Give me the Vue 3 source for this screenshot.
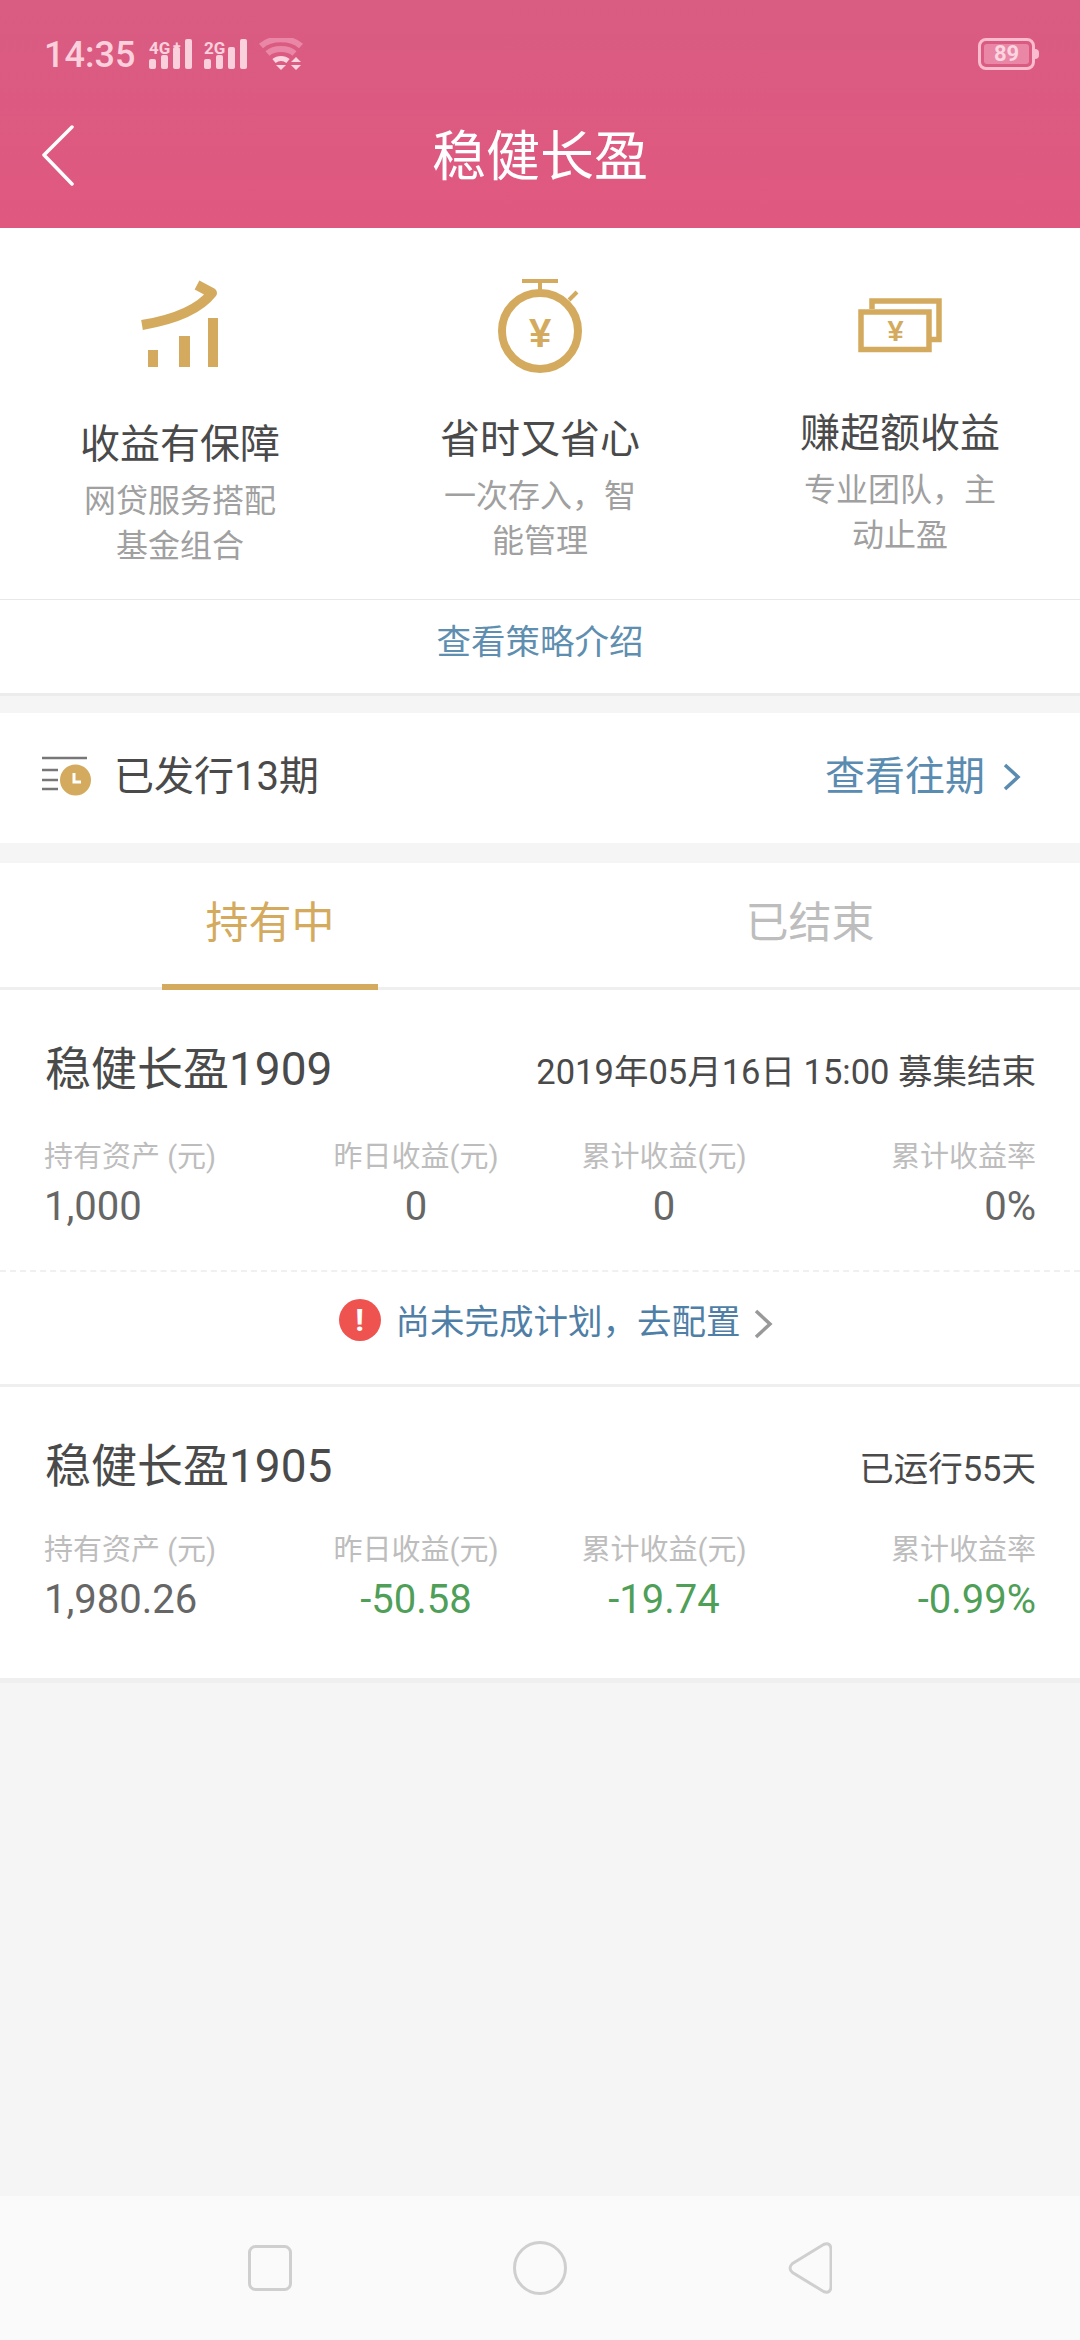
<script setup>
const cards = [
  {
    id: 1,
    name: '稳健长盈1909',
    meta: '2019年05月16日 15:00 募集结束',
    stats: [
      { label: '持有资产 (元)', value: '1,000' },
      { label: '昨日收益(元)', value: '0' },
      { label: '累计收益(元)', value: '0' },
      { label: '累计收益率', value: '0%' }
    ],
    notice: true
  },
  {
    id: 2,
    name: '稳健长盈1905',
    meta: '已运行55天',
    stats: [
      { label: '持有资产 (元)', value: '1,980.26' },
      { label: '昨日收益(元)', value: '-50.58', down: true },
      { label: '累计收益(元)', value: '-19.74', down: true },
      { label: '累计收益率', value: '-0.99%', down: true }
    ],
    notice: false
  }
]
</script>

<template>
  <div class="page">
    <header class="head">
      <div class="status">
        <span class="time">14:35</span>
        <svg class="signal" width="100" height="36" viewBox="0 0 100 36">
          <text x="0" y="16" class="net">4G</text>
          <text x="24" y="13" class="plus">+</text>
          <rect x="0" y="21" width="7" height="10" rx="2" />
          <rect x="12" y="17" width="7" height="14" rx="2" />
          <rect x="24" y="9" width="7" height="22" rx="2" />
          <rect x="36" y="1" width="7" height="30" rx="2" />
          <text x="55" y="16" class="net">2G</text>
          <rect x="55" y="21" width="7" height="10" rx="2" />
          <rect x="67" y="17" width="7" height="14" rx="2" />
          <rect x="79" y="9" width="7" height="22" rx="2" />
          <rect x="91" y="1" width="7" height="30" rx="2" />
        </svg>
        <svg class="wifi" width="44" height="34" viewBox="0 0 44 34">
          <path d="M2 8 C12 -1 32 -1 42 8" class="wifi-dim" />
          <path d="M8.5 15.5 C15 9.5 29 9.5 35.5 15.5" class="wifi-dim" />
          <path d="M15 23 C19 19.5 25 19.5 29 23" class="wifi-on" />
          <path d="M17 27 H27 L22 32 Z" fill="#fbd5e0" />
          <path d="M32 24 L37 19 L42 24 Z M32 27 H42 L37 32 Z" fill="#fbd5e0" />
        </svg>
        <span class="grow"></span>
        <div class="battery">
          <div class="battery-fill">89</div>
          <i class="battery-tip"></i>
        </div>
      </div>
      <div class="title-row">
        <svg class="back" width="34" height="62" viewBox="0 0 34 62">
          <path d="M31 2 L3 30 L31 59" />
        </svg>
        <h1>稳健长盈</h1>
      </div>
    </header>

    <section class="features">
      <div class="feature">
        <svg class="ic ic-chart" width="80" height="90" viewBox="140 280 80 90">
          <path class="gold-line" d="M142 325 C172 320 198 311 212 293 L197 285" />
          <rect x="148" y="350" width="10" height="17" />
          <rect x="179" y="336" width="11" height="31" />
          <rect x="208" y="318" width="10" height="49" />
        </svg>
        <div class="f-title">收益有保障</div>
        <p>网贷服务搭配基金组合</p>
      </div>
      <div class="feature">
        <svg class="ic ic-watch" width="90" height="98" viewBox="495 276 90 98">
          <circle class="gold-ring" cx="540" cy="331" r="38" />
          <path class="gold-thin" d="M522 281 H558 M540 281 V291 M569 300 L577 292" />
          <text x="540" y="347" class="yen big">¥</text>
        </svg>
        <div class="f-title">省时又省心</div>
        <p>一次存入，智能管理</p>
      </div>
      <div class="feature">
        <svg class="ic ic-money" width="90" height="60" viewBox="855 295 90 60">
          <path class="gold-thin wide" d="M872 309 V301 H939 V339.5 H931" />
          <rect class="gold-thin wide" x="861" y="312" width="68" height="37.500" />
          <text x="895.5" y="341" class="yen small">¥</text>
        </svg>
        <div class="f-title">赚超额收益</div>
        <p>专业团队，主动止盈</p>
      </div>
    </section>
    <div class="strategy">查看策略介绍</div>

    <section class="issued">
      <svg width="50" height="40" viewBox="0 0 50 40">
        <path class="list-lines" d="M0 2 H45 M0 14 H16 M0 24 H16 M0 33 H16" />
        <circle cx="33.500" cy="24" r="15.500" fill="#d4ab5e" />
        <path d="M32 17 V26 H39" fill="none" stroke="#fff" stroke-width="3" />
      </svg>
      <span class="issued-text">已发行13期</span>
      <span class="grow"></span>
      <span class="history">查看往期</span>
      <svg class="chev" width="20" height="30" viewBox="0 0 20 30">
        <path d="M3 3 L16 15 L3 27" />
      </svg>
    </section>

    <nav class="tabs">
      <div class="tab active">持有中</div>
      <div class="tab">已结束</div>
    </nav>

    <section class="cards">
      <article v-for="card in cards" :key="card.id" class="card" :class="{ 'has-notice': card.notice }">
        <div class="card-top">
          <h2>{{ card.name }}</h2>
          <span class="meta">{{ card.meta }}</span>
        </div>
        <div class="stats">
          <div v-for="s in card.stats" :key="s.label" class="stat">
            <div class="label">{{ s.label }}</div>
            <div class="value" :class="{ down: s.down }">{{ s.value }}</div>
          </div>
        </div>
        <div v-if="card.notice" class="notice">
          <span class="alert">!</span>
          <span class="notice-text">尚未完成计划，去配置</span>
          <svg class="chev-grey" width="20" height="30" viewBox="0 0 20 30">
            <path d="M2 2 L16 15 L2 28" />
          </svg>
        </div>
      </article>
    </section>

    <span class="grow"></span>

    <footer class="navbar">
      <svg width="44" height="46" viewBox="0 0 44 46"><rect x="1.500" y="1.500" width="41" height="43" rx="6" /></svg>
      <svg width="54" height="54" viewBox="0 0 54 54"><circle cx="27" cy="27" r="25.500" /></svg>
      <svg width="44" height="52" viewBox="0 0 44 52"><path d="M4 21.500 L35 2.500 Q42 0 42.500 7 V45 Q42 52 35 49.500 L4 30.500 Q-1 26 4 21.500 Z" transform="translate(0.500 0)" /></svg>
    </footer>
  </div>
</template>

<style>
html, body { margin: 0; padding: 0; background: #f5f5f5; }
</style>

<style scoped>
.page {
  width: 1080px;
  height: 2340px;
  display: flex;
  flex-direction: column;
  background: #f5f5f5;
  font-family: Roboto, "Noto Sans CJK SC", sans-serif;
  overflow: hidden;
}
.grow { flex: 1; }

.head {
  height: 228px;
  flex: none;
  background: linear-gradient(#d95c82, #e05880);
  color: #fff;
}
.status {
  height: 110px;
  box-sizing: border-box;
  padding: 37px 45px 0 44px;
  display: flex;
  align-items: flex-start;
  color: #fbd0dd;
}
.time { font-size: 36px; font-weight: 500; line-height: 36px; width: 105px; }
.signal { fill: #fbd0dd; margin-top: 1px; }
.net { font-size: 17px; font-weight: 700; fill: #fbd0dd; font-family: Roboto, sans-serif; }
.plus { font-size: 14px; font-weight: 700; fill: #fbd0dd; }
.wifi { margin: 1px 0 0 10px; fill: none; }
.wifi-dim { fill: none; stroke: #ea87a6; stroke-width: 6; }
.wifi-on { fill: none; stroke: #fbd5e0; stroke-width: 5; }
.battery {
  position: relative;
  width: 57px;
  height: 32px;
  margin-top: 1px;
  box-sizing: border-box;
  border: 3px solid #fbbccf;
  border-radius: 8px;
  padding: 3px;
}
.battery-fill {
  height: 100%;
  background: #ea87a6;
  border-radius: 3px;
  color: #fbd5e0;
  font-size: 22px;
  font-weight: 700;
  line-height: 20px;
  text-align: center;
}
.battery-tip {
  position: absolute;
  right: -7px;
  top: 8px;
  width: 4px;
  height: 10px;
  background: #fbbccf;
  border-radius: 0 4px 4px 0;
}
.title-row {
  position: relative;
  height: 96px;
  display: flex;
  align-items: center;
  justify-content: center;
}
h1 {
  margin: 0;
  font-size: 54px;
  font-weight: 400;
  line-height: 90px;
}
.back {
  position: absolute;
  left: 41px;
  top: 15px;
  fill: none;
  stroke: #fff;
  stroke-width: 3.500;
  stroke-linecap: round;
  stroke-linejoin: round;
}

.features {
  height: 371px;
  flex: none;
  background: #fff;
  display: grid;
  grid-template-columns: repeat(3, 360px);
  border-bottom: 1px solid #e8e8e8;
}
.feature {
  display: flex;
  flex-direction: column;
  align-items: center;
}
.ic { display: block; }
.ic-chart { margin: 52px 0 47px; }
.ic-watch { margin: 48px 0 38px; }
.ic-money { margin: 67px 0 51px; }
.f-title {
  font-size: 40px;
  line-height: 56px;
  color: #4a4a4a;
}
.feature p {
  margin: 5.5px 0 0;
  width: 196px;
  font-size: 32px;
  line-height: 45px;
  color: #a0a0a0;
  text-align: center;
}
.gold-line { fill: none; stroke: #d4ab5e; stroke-width: 10; stroke-linejoin: round; }
.ic-chart rect { fill: #d4ab5e; }
.gold-ring { fill: none; stroke: #d4ab5e; stroke-width: 8; }
.gold-thin { fill: none; stroke: #d4ab5e; stroke-width: 4; }
.wide { stroke-width: 5.500; }
.yen { fill: #d4ab5e; text-anchor: middle; font-weight: 700; font-family: "Liberation Sans", sans-serif; }
.yen.big { font-size: 40px; }
.yen.small { font-size: 29px; }

.strategy {
  height: 96px;
  flex: none;
  box-sizing: border-box;
  background: #fff;
  padding-top: 19px;
  font-size: 34.500px;
  line-height: 46px;
  color: #5f8fb0;
  text-align: center;
  border-bottom: 3px solid #ececec;
}

.issued {
  height: 130px;
  flex: none;
  box-sizing: border-box;
  margin-top: 17px;
  background: #fff;
  display: flex;
  align-items: center;
  padding: 0 58px 10px 42px;
}
.issued svg:first-child { margin-top: 6px; }
.list-lines { fill: none; stroke: #777; stroke-width: 2.500; }
.issued-text { margin-left: 22px; font-size: 40px; color: #4a4a4a; }
.history { font-size: 40px; color: #5a8bb0; }
.chev { margin: 8px 0 0 17px; fill: none; stroke: #5a8bb0; stroke-width: 3.500; }
.chev path, .chev-grey path { fill: none; }

.tabs {
  height: 124px;
  flex: none;
  margin-top: 20px;
  background: #fff;
  display: grid;
  grid-template-columns: 1fr 1fr;
  border-bottom: 3px solid #efefef;
}
.tab {
  position: relative;
  text-align: center;
  font-size: 43px;
  line-height: 120px;
  color: #bdbdbd;
}
.tab.active { color: #d4ab5e; }
.tab.active::after {
  content: "";
  position: absolute;
  left: 162px;
  width: 216px;
  bottom: -3px;
  height: 6px;
  background: #d4ab5e;
}

.cards {
  background: #fff;
  border-bottom: 5px solid #efefef;
  flex: none;
}
.card { border-bottom: 3px solid #efefef; }
.card:last-child { border-bottom: 0; padding-bottom: 53px; }
.card-top {
  display: flex;
  justify-content: space-between;
  align-items: center;
  padding: 49px 44px 0 45px;
  height: 60px;
}
.has-notice .card-top { padding-top: 49px; }
h2 {
  margin: 0;
  font-size: 46px;
  font-weight: 400;
  line-height: 60px;
  color: #4a4a4a;
}
.meta { font-size: 34.500px; color: #4a4a4a; }
.stats {
  display: grid;
  grid-template-columns: repeat(4, 248px);
  padding: 34px 44px 0;
  height: 95px;
}
.has-notice .stats { padding-top: 38px; }
.stat { text-align: center; }
.stat:first-child { text-align: left; }
.stat:last-child { text-align: right; }
.label { font-size: 29px; line-height: 40px; color: #bdbdbd; }
.value { margin-top: 5px; font-size: 40px; line-height: 50px; color: #666; }
.value.down { color: #4f9f58; }
.notice {
  margin-top: 38px;
  height: 112px;
  border-top: 2px dashed #f0f0f0;
  display: flex;
  align-items: center;
  justify-content: center;
  padding-left: 32px;
}
.alert {
  margin-top: -16px;
  width: 42px;
  height: 42px;
  border-radius: 50%;
  background: #ef5350;
  color: #fff;
  font-size: 32px;
  font-weight: 700;
  line-height: 42px;
  text-align: center;
  margin-right: 15px;
}
.notice-text { margin-top: -19px; font-size: 34.500px; color: #4f7fa6; }
.chev-grey { margin-left: 13px; margin-top: -9px; fill: none; stroke: #999; stroke-width: 3.500; }

.navbar {
  height: 144px;
  flex: none;
  background: #fafafa;
  display: grid;
  grid-template-columns: repeat(3, 270px);
  justify-content: center;
  justify-items: center;
  align-items: center;
}
.navbar svg { fill: none; stroke: #cfcfcf; stroke-width: 3; }
</style>
